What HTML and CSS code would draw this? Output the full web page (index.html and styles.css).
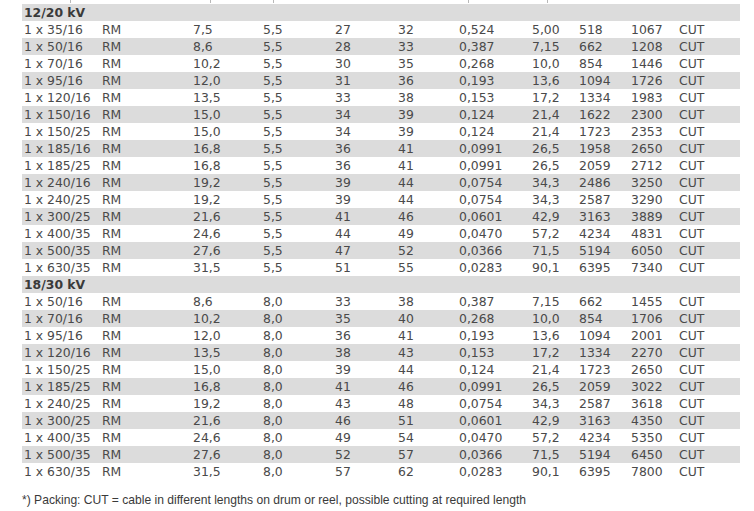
FILE: index.html
```html
<!DOCTYPE html>
<html>
<head>
<meta charset="utf-8">
<link rel="stylesheet" href="styles.css">
</head>
<body>
<div class="marks"><span class="mk m1"></span><span class="mk m2"></span><span class="mk m3"></span><span class="mk m4"></span><span class="mk m5"></span></div>
<table class="data">
<colgroup>
<col class="c1"><col class="c2"><col class="c3"><col class="c4"><col class="c5"><col class="c6"><col class="c7"><col class="c8"><col class="c9"><col class="c10"><col class="c11">
</colgroup>
<tbody>
<tr class="alt grp"><td colspan="11">12/20 kV</td></tr>
<tr><td>1 x 35/16</td><td>RM</td><td>7,5</td><td>5,5</td><td>27</td><td>32</td><td>0,524</td><td>5,00</td><td>518</td><td>1067</td><td>CUT</td></tr>
<tr class="alt"><td>1 x 50/16</td><td>RM</td><td>8,6</td><td>5,5</td><td>28</td><td>33</td><td>0,387</td><td>7,15</td><td>662</td><td>1208</td><td>CUT</td></tr>
<tr><td>1 x 70/16</td><td>RM</td><td>10,2</td><td>5,5</td><td>30</td><td>35</td><td>0,268</td><td>10,0</td><td>854</td><td>1446</td><td>CUT</td></tr>
<tr class="alt"><td>1 x 95/16</td><td>RM</td><td>12,0</td><td>5,5</td><td>31</td><td>36</td><td>0,193</td><td>13,6</td><td>1094</td><td>1726</td><td>CUT</td></tr>
<tr><td>1 x 120/16</td><td>RM</td><td>13,5</td><td>5,5</td><td>33</td><td>38</td><td>0,153</td><td>17,2</td><td>1334</td><td>1983</td><td>CUT</td></tr>
<tr class="alt"><td>1 x 150/16</td><td>RM</td><td>15,0</td><td>5,5</td><td>34</td><td>39</td><td>0,124</td><td>21,4</td><td>1622</td><td>2300</td><td>CUT</td></tr>
<tr><td>1 x 150/25</td><td>RM</td><td>15,0</td><td>5,5</td><td>34</td><td>39</td><td>0,124</td><td>21,4</td><td>1723</td><td>2353</td><td>CUT</td></tr>
<tr class="alt"><td>1 x 185/16</td><td>RM</td><td>16,8</td><td>5,5</td><td>36</td><td>41</td><td>0,0991</td><td>26,5</td><td>1958</td><td>2650</td><td>CUT</td></tr>
<tr><td>1 x 185/25</td><td>RM</td><td>16,8</td><td>5,5</td><td>36</td><td>41</td><td>0,0991</td><td>26,5</td><td>2059</td><td>2712</td><td>CUT</td></tr>
<tr class="alt"><td>1 x 240/16</td><td>RM</td><td>19,2</td><td>5,5</td><td>39</td><td>44</td><td>0,0754</td><td>34,3</td><td>2486</td><td>3250</td><td>CUT</td></tr>
<tr><td>1 x 240/25</td><td>RM</td><td>19,2</td><td>5,5</td><td>39</td><td>44</td><td>0,0754</td><td>34,3</td><td>2587</td><td>3290</td><td>CUT</td></tr>
<tr class="alt"><td>1 x 300/25</td><td>RM</td><td>21,6</td><td>5,5</td><td>41</td><td>46</td><td>0,0601</td><td>42,9</td><td>3163</td><td>3889</td><td>CUT</td></tr>
<tr><td>1 x 400/35</td><td>RM</td><td>24,6</td><td>5,5</td><td>44</td><td>49</td><td>0,0470</td><td>57,2</td><td>4234</td><td>4831</td><td>CUT</td></tr>
<tr class="alt"><td>1 x 500/35</td><td>RM</td><td>27,6</td><td>5,5</td><td>47</td><td>52</td><td>0,0366</td><td>71,5</td><td>5194</td><td>6050</td><td>CUT</td></tr>
<tr><td>1 x 630/35</td><td>RM</td><td>31,5</td><td>5,5</td><td>51</td><td>55</td><td>0,0283</td><td>90,1</td><td>6395</td><td>7340</td><td>CUT</td></tr>
<tr class="alt grp"><td colspan="11">18/30 kV</td></tr>
<tr><td>1 x 50/16</td><td>RM</td><td>8,6</td><td>8,0</td><td>33</td><td>38</td><td>0,387</td><td>7,15</td><td>662</td><td>1455</td><td>CUT</td></tr>
<tr class="alt"><td>1 x 70/16</td><td>RM</td><td>10,2</td><td>8,0</td><td>35</td><td>40</td><td>0,268</td><td>10,0</td><td>854</td><td>1706</td><td>CUT</td></tr>
<tr><td>1 x 95/16</td><td>RM</td><td>12,0</td><td>8,0</td><td>36</td><td>41</td><td>0,193</td><td>13,6</td><td>1094</td><td>2001</td><td>CUT</td></tr>
<tr class="alt"><td>1 x 120/16</td><td>RM</td><td>13,5</td><td>8,0</td><td>38</td><td>43</td><td>0,153</td><td>17,2</td><td>1334</td><td>2270</td><td>CUT</td></tr>
<tr><td>1 x 150/25</td><td>RM</td><td>15,0</td><td>8,0</td><td>39</td><td>44</td><td>0,124</td><td>21,4</td><td>1723</td><td>2650</td><td>CUT</td></tr>
<tr class="alt"><td>1 x 185/25</td><td>RM</td><td>16,8</td><td>8,0</td><td>41</td><td>46</td><td>0,0991</td><td>26,5</td><td>2059</td><td>3022</td><td>CUT</td></tr>
<tr><td>1 x 240/25</td><td>RM</td><td>19,2</td><td>8,0</td><td>43</td><td>48</td><td>0,0754</td><td>34,3</td><td>2587</td><td>3618</td><td>CUT</td></tr>
<tr class="alt"><td>1 x 300/25</td><td>RM</td><td>21,6</td><td>8,0</td><td>46</td><td>51</td><td>0,0601</td><td>42,9</td><td>3163</td><td>4350</td><td>CUT</td></tr>
<tr><td>1 x 400/35</td><td>RM</td><td>24,6</td><td>8,0</td><td>49</td><td>54</td><td>0,0470</td><td>57,2</td><td>4234</td><td>5350</td><td>CUT</td></tr>
<tr class="alt"><td>1 x 500/35</td><td>RM</td><td>27,6</td><td>8,0</td><td>52</td><td>57</td><td>0,0366</td><td>71,5</td><td>5194</td><td>6450</td><td>CUT</td></tr>
<tr><td>1 x 630/35</td><td>RM</td><td>31,5</td><td>8,0</td><td>57</td><td>62</td><td>0,0283</td><td>90,1</td><td>6395</td><td>7800</td><td>CUT</td></tr>
</tbody>
</table>
<p class="note">*) Packing: CUT = cable in different lengths on drum or reel, possible cutting at required length</p>
</body>
</html>
```
FILE: styles.css
```css
html, body {
  margin: 0;
  padding: 0;
  background: #ffffff;
}
body {
  padding-left: 22px;
  font-family: "DejaVu Sans", Verdana, sans-serif;
  color: #4a4a4a;
}
.marks {
  display: flex;
  height: 4px;
  align-items: flex-start;
}
.mk {
  display: block;
  width: 1px;
  height: 3px;
  background: #b8b8b8;
}
.m1 { margin-left: 48px; }
.m2 { margin-left: 139px; }
.m3 { margin-left: 62px; }
.m4 { margin-left: 194px; }
.m5 { margin-left: 78px; }
.data {
  border-collapse: collapse;
  table-layout: fixed;
  width: 718px;
  font-size: 12.4px;
}
.data td {
  height: 17px;
  padding: 0 0 0 2px;
  line-height: 17px;
  white-space: nowrap;
  overflow: hidden;
  vertical-align: middle;
}
.data tr.alt td {
  background: #dcdcdc;
}
.data tr.grp td {
  font-weight: bold;
  color: #3a3a3a;
}
.c1 { width: 78px; }
.c2 { width: 91px; }
.c3 { width: 70px; }
.c4 { width: 72px; }
.c5 { width: 63px; }
.c6 { width: 61px; }
.c7 { width: 73px; }
.c8 { width: 47px; }
.c9 { width: 52px; }
.c10 { width: 48px; }
.c11 { width: 63px; }
.note {
  margin: 13px 0 0 0;
  font-family: "Liberation Sans", Arial, sans-serif;
  font-size: 12.1px;
  line-height: 14px;
  color: #3a3a3a;
}
```
